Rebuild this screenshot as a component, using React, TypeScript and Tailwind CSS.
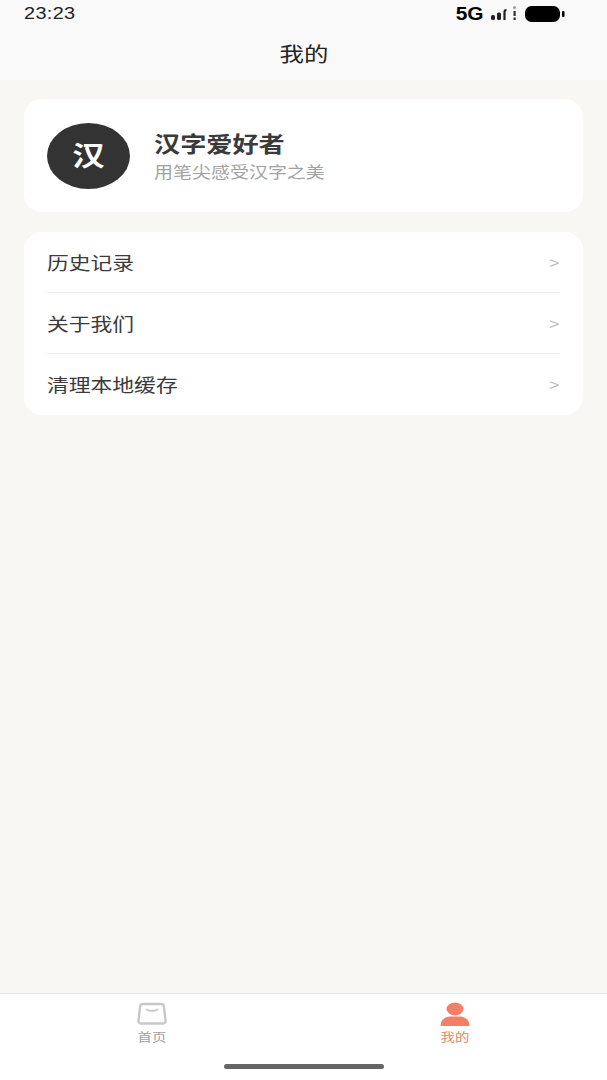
const cjk = "font-['Noto_Sans_CJK_SC','Noto_Sans',sans-serif]";

function Stretched({ className, children }: { className: string; children: React.ReactNode }) {
  return <span className={`inline-block origin-left scale-x-[1.21] whitespace-nowrap ${className}`}>{children}</span>;
}

function MenuRow({ label, last }: { label: string; last?: boolean }) {
  return (
    <div className={`h-[61px] flex items-center justify-between ${last ? "" : "border-b border-[#f0f0ee]"}`}>
      <Stretched className="text-[18px] text-[#3a3a3a] -translate-y-[0.5px]">{label}</Stretched>
      <span className="text-[15px] text-[#bbbbbb] font-['Liberation_Sans',sans-serif] scale-x-[1.2] translate-y-[1px] -translate-x-[1px]">&gt;</span>
    </div>
  );
}

export default function App() {
  return (
    <div className={`w-[607px] h-[1080px] flex flex-col bg-[#f8f7f3] overflow-hidden ${cjk}`}>
      <div className="h-[80px] bg-[#f9f9f9] flex flex-col shrink-0">
        <div className="h-[28px] pl-[24px] pr-[42px] flex items-center justify-between">
          <span className="font-['Liberation_Sans',sans-serif] text-[17px] tracking-[0.3px] text-[#222222] inline-block origin-left scale-x-[1.17]">23:23</span>
          <div className="flex items-center gap-[8px]">
            <span className="font-['Liberation_Sans',sans-serif] font-bold text-[19px] text-black inline-block scale-x-[1.1] -translate-x-[1px]">5G</span>
            <svg width="26" height="18" viewBox="0 0 26 18" fill="#222">
              <rect x="0" y="10" width="4" height="5" rx="1.5" />
              <rect x="6" y="7.500" width="4" height="7.500" rx="1.5" />
              <path d="M13.500 15V7q0-2 2-2" stroke="#222" strokeWidth="2.2" fill="none" />
              <rect x="22" y="1" width="3" height="3" rx="1.5" fill="#999" />
              <rect x="22.500" y="6" width="2.2" height="5" fill="#333" />
              <rect x="22.500" y="12.500" width="2.2" height="2.500" fill="#333" />
            </svg>
            <svg width="40" height="16" viewBox="0 0 40 16" fill="#000">
              <rect x="0" y="0" width="35" height="16" rx="6.500" />
              <rect x="37" y="5" width="2.500" height="6" rx="1" />
            </svg>
          </div>
        </div>
        <div className="flex-1 flex items-center justify-center pb-[1px]">
          <span className="text-[20px] text-[#222222] scale-x-[1.22] whitespace-nowrap">我的</span>
        </div>
      </div>

      <main className="flex-1 px-[24px] pt-[19px] flex flex-col gap-[20px]">
        <section className="h-[113px] bg-white rounded-[18px] pl-[23px] flex items-center gap-[24px]">
          <div className="w-[83px] h-[66px] rounded-[50%] bg-[#333333] flex items-center justify-center shrink-0">
            <span className="text-[27px] font-bold text-white scale-x-[1.2]">汉</span>
          </div>
          <div className="flex flex-col">
            <Stretched className="text-[21.6px] leading-[29px] font-bold text-[#3a3a3a]">汉字爱好者</Stretched>
            <Stretched className="text-[15.7px] leading-[26px] text-[#a3a3a3] translate-y-[1.5px]">用笔尖感受汉字之美</Stretched>
          </div>
        </section>

        <section className="bg-white rounded-[18px] px-[23px]">
          <MenuRow label="历史记录" />
          <MenuRow label="关于我们" />
          <MenuRow label="清理本地缓存" last />
        </section>
      </main>

      <nav className="h-[87px] shrink-0 bg-white border-t border-[#e8e8e6] flex flex-col">
        <div className="flex h-[56px]">
          <div className="flex-1 flex flex-col items-center pt-[8px]">
            <svg width="30" height="24" viewBox="0 0 30 24" fill="none">
              <path d="M5.500 2h19q2 0 2.300 2l1.700 14q.3 3.500-2.500 3.500H4q-2.800 0-2.500-3.500L3.200 4q.3-2 2.300-2z" stroke="#c8c8c8" strokeWidth="2.4" strokeLinejoin="round" />
              <path d="M9.500 7.500q5.500 3 11 0" stroke="#c8c8c8" strokeWidth="1.800" strokeLinecap="round" />
            </svg>
            <span className="text-[12px] leading-[16px] mt-[3px] text-[#a0a0a0] scale-x-[1.2]">首页</span>
          </div>
          <div className="flex-1 flex flex-col items-center pt-[8px]">
            <svg width="30" height="24" viewBox="0 0 30 24" fill="#f28068">
              <ellipse cx="15" cy="7" rx="8.500" ry="6.500" />
              <path d="M0.500 24q0-8.500 9-9.500h11q9 1 9 9.500z" />
            </svg>
            <span className="text-[12px] leading-[16px] mt-[3px] text-[#f28068] scale-x-[1.2]">我的</span>
          </div>
        </div>
        <div className="flex justify-center pt-[13.500px]">
          <div className="w-[160px] h-[5px] rounded-full bg-[#666666]" />
        </div>
      </nav>
    </div>
  );
}
